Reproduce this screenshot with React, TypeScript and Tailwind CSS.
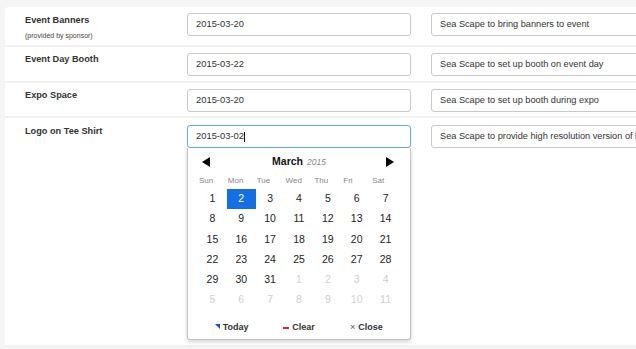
import React from "react";

const font = { fontFamily: '"Liberation Sans", Arial, Helvetica, sans-serif' };

function Row({
  label,
  sub,
  date,
  note,
  focused,
  h,
  pt,
  lpt,
  children,
}: {
  label: string;
  sub?: string;
  date: string;
  note: string;
  focused?: boolean;
  h: string;
  pt: string;
  lpt: string;
  children?: React.ReactNode;
}) {
  return (
    <div className={`flex border-b-2 border-[#f1f1f1] ${h} ${pt}`}>
      <div className={`w-[182px] shrink-0 pl-[20px] ${lpt}`}>
        <div className="text-[9.2px] leading-[11px] font-bold text-[#333]">{label}</div>
        {sub && <div className="mt-[5px] text-[7px] leading-[9px] text-[#444]">{sub}</div>}
      </div>
      <div className="relative w-[224px] shrink-0">
        <div
          className={`flex h-[23px] items-center rounded-[3px] border bg-white pl-[8px] text-[9.4px] text-[#333] ${
            focused ? "border-[#66a9e6]" : "border-[#c9c9c9]"
          }`}
        >
          {date}
          {focused && <span className="ml-[0.5px] inline-block h-[10px] w-px bg-[#111]" />}
        </div>
        {children}
      </div>
      <div className="ml-[20px] w-[260px] shrink-0">
        <div className="flex h-[23px] items-center overflow-hidden whitespace-nowrap rounded-[3px] border border-[#c9c9c9] bg-white pl-[8px] text-[9.2px] text-[#333]">
          {note}
        </div>
      </div>
    </div>
  );
}

function DatePicker() {
  const weeks: { d: number; cur: boolean }[][] = [];
  const days: { d: number; cur: boolean }[] = [];
  for (let i = 1; i <= 31; i++) days.push({ d: i, cur: true });
  for (let i = 1; i <= 11; i++) days.push({ d: i, cur: false });
  for (let w = 0; w < 6; w++) weeks.push(days.slice(w * 7, w * 7 + 7));
  const heads = ["Sun", "Mon", "Tue", "Wed", "Thu", "Fri", "Sat"];
  return (
    <div className="absolute left-0 top-[23px] z-10 w-[224px] rounded-b-[3px] border border-t-0 border-[#c4c4c4] bg-white px-[10px] pb-[2px] pt-[4px] shadow-[0_2px_4px_rgba(0,0,0,0.18)]">
      <div className="relative flex h-[20px] items-center justify-center">
        <svg className="absolute left-[4px] top-[5px]" width="8" height="10" viewBox="0 0 8 10">
          <polygon points="8,0 8,10 0,5" fill="#000" />
        </svg>
        <span className="text-[10.5px] font-bold text-[#111]">March</span>
        <span className="ml-[4px] text-[8.5px] italic text-[#888]">2015</span>
        <svg className="absolute right-[6px] top-[5px]" width="8" height="10" viewBox="0 0 8 10">
          <polygon points="0,0 0,10 8,5" fill="#000" />
        </svg>
      </div>
      <div className="grid h-[17px] grid-cols-7 items-center">
        {heads.map((h) => (
          <div key={h} className="pl-[1px] text-[8px] text-[#888]">
            {h}
          </div>
        ))}
      </div>
      <div>
        {weeks.map((wk, i) => (
          <div key={i} className="grid h-[20.2px] grid-cols-7">
            {wk.map((c, j) => {
              const sel = c.cur && c.d === 2;
              return (
                <div
                  key={j}
                  className={`flex items-center justify-center text-[10.5px] ${
                    sel ? "bg-[#136fe3] text-white" : c.cur ? "text-[#222]" : "text-[#cfcfcf]"
                  }`}
                >
                  {c.d}
                </div>
              );
            })}
          </div>
        ))}
      </div>
      <div className="mt-[9px] grid h-[18px] grid-cols-3 items-center text-[9px] font-bold text-[#333]">
        <div className="flex items-center justify-center">
          <svg width="5" height="5" viewBox="0 0 5 5" className="mr-[3px] mb-[3px]">
            <polygon points="0,0 5,0 5,5" fill="#1f4fb8" />
          </svg>
          Today
        </div>
        <div className="flex items-center justify-center">
          <span className="mr-[3px] inline-block h-[2px] w-[6px] bg-[#e0261b]" />
          Clear
        </div>
        <div className="flex items-center justify-center">
          <span className="mr-[3px] text-[9px] font-normal text-[#555]">×</span>
          Close
        </div>
      </div>
    </div>
  );
}

export default function App() {
  return (
    <div className="h-[349px] w-[636px] overflow-hidden bg-[#f5f5f5]" style={font}>
      <div className="ml-[5px] mt-[7px] w-[700px] rounded-tl-[4px] bg-white">
        <Row
          label="Event Banners"
          sub="(provided by sponsor)"
          date="2015-03-20"
          note="Sea Scape to bring banners to event"
          h="h-[40px]"
          pt="pt-[6px]"
          lpt="pt-[2px]"
        />
        <Row
          label="Event Day Booth"
          date="2015-03-22"
          note="Sea Scape to set up booth on event day"
          h="h-[36px]"
          pt="pt-[6px]"
          lpt="pt-[1px]"
        />
        <Row
          label="Expo Space"
          date="2015-03-20"
          note="Sea Scape to set up booth during expo"
          h="h-[35px]"
          pt="pt-[6px]"
          lpt="pt-[1px]"
        />
        <Row
          label="Logo on Tee Shirt"
          date="2015-03-02"
          note="Sea Scape to provide high resolution version of logo"
          focused
          h="h-[229px]"
          pt="pt-[7px]"
          lpt="pt-[1px]"
        >
          <DatePicker />
        </Row>
      </div>
    </div>
  );
}
